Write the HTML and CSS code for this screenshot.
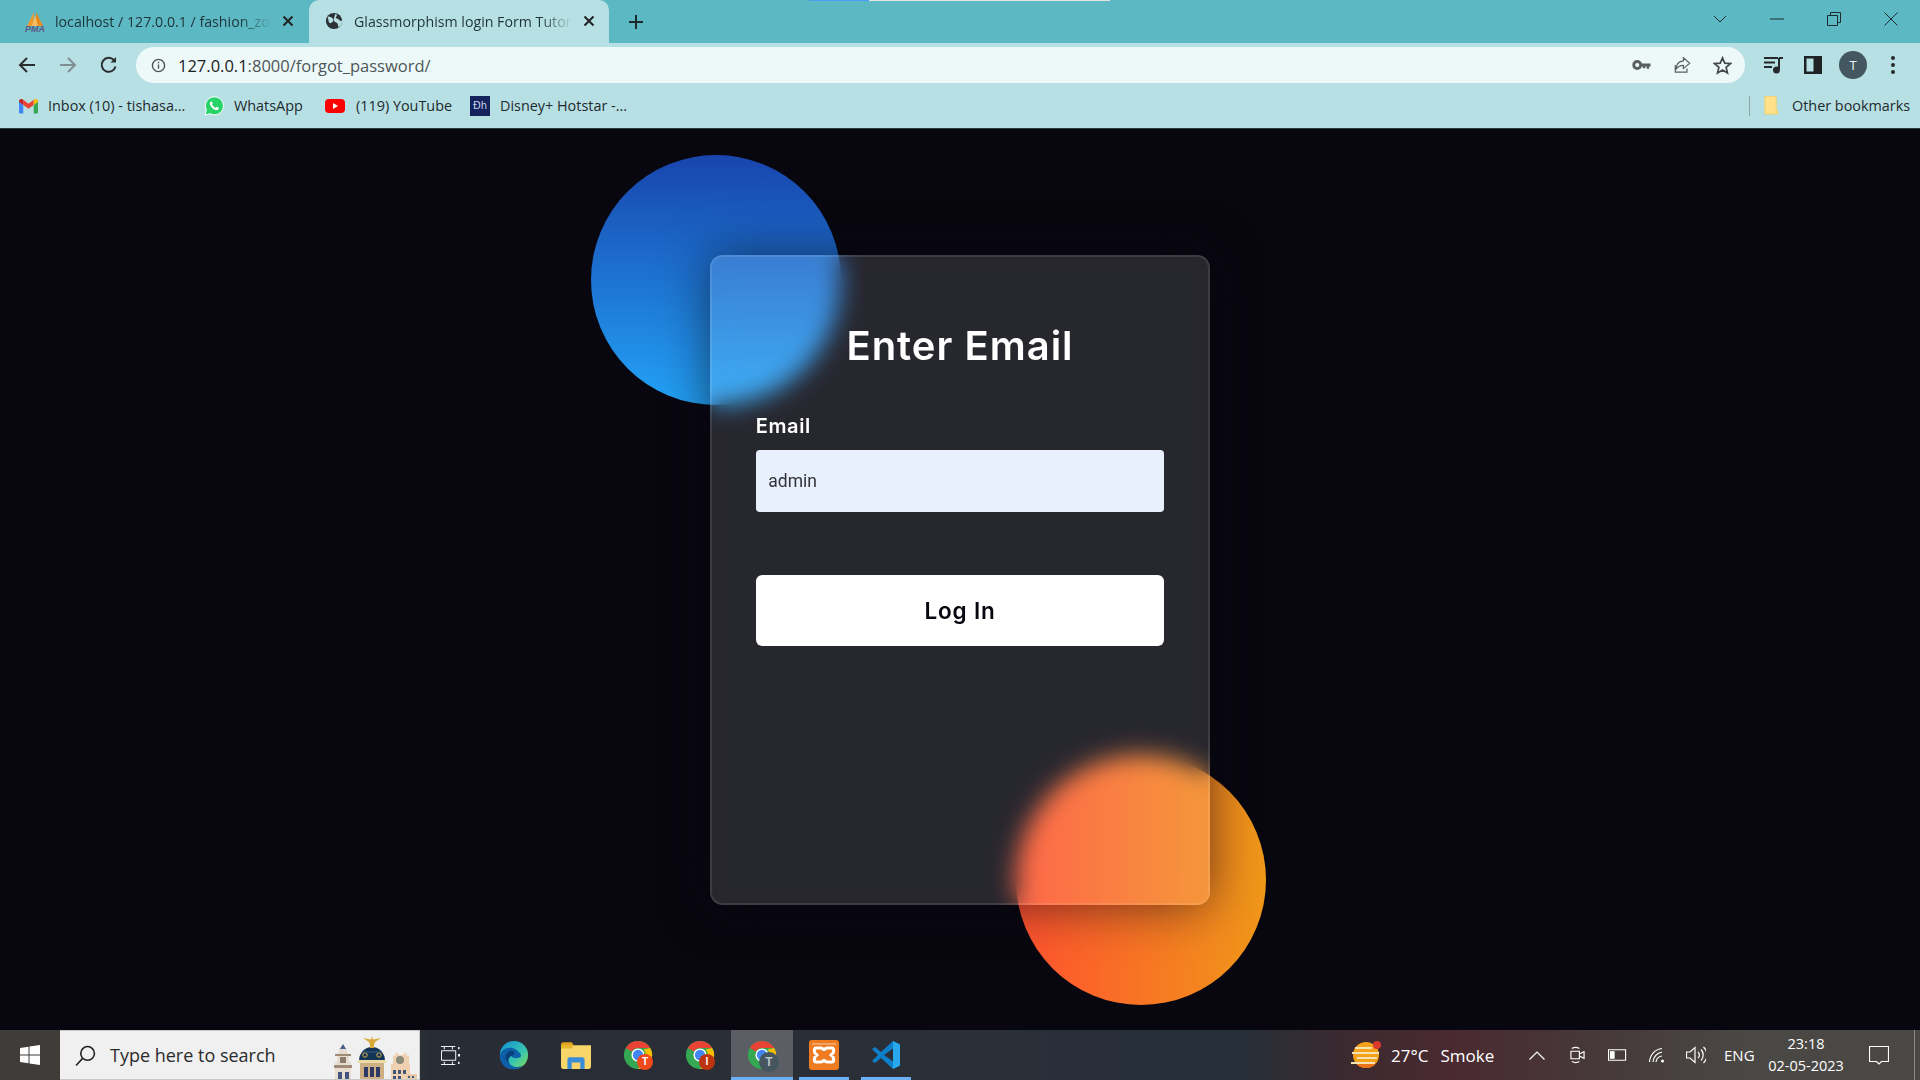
FILE: index.html
```html
<!DOCTYPE html>
<html>

<head>
    <title>Glassmorphism login Form Tutorial</title>
    <link rel="stylesheet" href="styles.css">
</head>

<body>
    <div class="browser">
        <div class="tabstrip">
            <div class="share-bar"><span class="share-bar-blue"></span></div>
            <div class="tab">
                <svg class="fav fav-sails" viewBox="0 0 20 14">
                    <path d="M9 0 2 14h6z" fill="#f29a2e"/>
                    <path d="M11 0v14h7z" fill="#e8891c"/>
                    <path d="M10 3 7 14h6z" fill="#f8bd62"/>
                </svg>
                <span class="fav-pma">PMA</span>
                <span class="tab-title">localhost / 127.0.0.1 / fashion_zone</span>
                <svg class="tab-x" viewBox="0 0 12 12"><path d="M1.5 1.5l9 9M10.5 1.5l-9 9"/></svg>
            </div>
            <div class="tab tab-active">
                <svg class="fav fav-globe" viewBox="0 0 20 20">
                    <circle cx="10" cy="10" r="9" fill="#2b3134"/>
                    <path d="M3 5c3 0 5 1 6 3s-1 3-2 4-3 0-3-2-1-3-1-5zM12 2c2 1 1 3 0 4s3 1 4 3 2 0 3 1c0 3-2 6-4 7-1-2 0-4-2-5s-4-2-3-5 1-4 2-5z" fill="#b7e0e4"/>
                </svg>
                <span class="tab-title">Glassmorphism login Form Tutorial</span>
                <svg class="tab-x" viewBox="0 0 12 12"><path d="M1.5 1.5l9 9M10.5 1.5l-9 9"/></svg>
            </div>
            <svg class="tab-new" viewBox="0 0 14 14"><path d="M7 0v14M0 7h14"/></svg>
            <div class="window-btns">
                <svg class="win-btn win-chev" viewBox="0 0 14 8"><path d="M1 1l6 6 6-6"/></svg>
                <svg class="win-btn" viewBox="0 0 14 14"><path d="M0 7h14"/></svg>
                <svg class="win-btn" viewBox="0 0 14 14"><path d="M.5 3.5h10v10H.5zM3.5 3.5v-3h10v10h-3"/></svg>
                <svg class="win-btn" viewBox="0 0 14 14"><path d="M.5.5l13 13M13.5.5l-13 13"/></svg>
            </div>
        </div>

        <div class="toolbar">
            <svg class="nav-btn" viewBox="0 0 18 18"><path d="M17 9H2M9 2 2 9l7 7"/></svg>
            <svg class="nav-btn nav-off" viewBox="0 0 18 18"><path d="M1 9h15M9 2l7 7-7 7"/></svg>
            <svg class="nav-btn" viewBox="0 0 18 18"><path d="M15.5 10.5A7 7 0 1 1 14 4.2"/><path d="M16 1v5.5h-5.5z" fill="#2a2d30" stroke="none"/></svg>
            <div class="omnibox">
                <svg class="info" viewBox="0 0 16 16">
                    <circle cx="8" cy="8" r="6.5"/>
                    <path d="M8 7v4.5M8 4v1.6"/>
                </svg>
                <span class="url"><b>127.0.0.1</b>:8000/forgot_password/</span>
                <svg class="omni-icon omni-key" viewBox="0 0 20 12">
                    <circle cx="5.5" cy="6" r="3.7" fill="none" stroke="#5a5e60" stroke-width="3"/>
                    <path d="M9 4.5h10.5v3H18v2.5h-2.5V7.5H14V9.5h-2.5v-2H9z" fill="#5a5e60"/>
                </svg>
                <svg class="omni-icon omni-share" viewBox="0 0 20 20">
                    <path d="M2 10v8h13v-4M2 18M11 2l7 6-7 6v-3.500c-3 0-6 1-8 4 0-5 3-8.500 8-9z" fill="none" stroke="#5a5e60" stroke-width="1.300"/>
                </svg>
                <svg class="omni-icon omni-star" viewBox="0 0 20 20">
                    <path d="M10 2l2.400 5.500 6 .5-4.600 3.900 1.400 5.900L10 14.800l-5.200 3 1.400-5.900L1.600 8l6-.5z" fill="none" stroke="#45494b" stroke-width="1.800"/>
                </svg>
            </div>
            <svg class="tool-icon tool-media" viewBox="0 0 20 18">
                <path d="M0 2h14M0 6.500h11M0 11h8" stroke="#26292b" stroke-width="2"/>
                <path d="M15 2v11" stroke="#26292b" stroke-width="2"/>
                <path d="M15 2h4" stroke="#26292b" stroke-width="2"/>
                <circle cx="12.500" cy="14" r="3.500" fill="#26292b"/>
            </svg>
            <svg class="tool-icon tool-panel" viewBox="0 0 18 18">
                <path d="M0 0h18v18H0z" fill="#1f2224"/>
                <path d="M2.500 2.500h7v13h-7z" fill="#b7e0e4"/>
            </svg>
            <span class="avatar">T</span>
            <svg class="tool-icon tool-menu" viewBox="0 0 4 18">
                <circle cx="2" cy="2" r="2" fill="#26292b"/>
                <circle cx="2" cy="9" r="2" fill="#26292b"/>
                <circle cx="2" cy="16" r="2" fill="#26292b"/>
            </svg>
        </div>

        <div class="bookmarks">
            <a class="bm bm-gmail">
                <svg class="bm-icon" viewBox="0 0 20 16">
                    <path d="M0 3v11.500c0 .800.700 1.500 1.500 1.500H4.500V7z" fill="#4285f4"/>
                    <path d="M20 3v11.500c0 .800-.700 1.500-1.500 1.500H15.500V7z" fill="#34a853"/>
                    <path d="M4.500 7 10 11l5.500-4V1.500L10 5.600 4.500 1.500z" fill="#ea4335"/>
                    <path d="M0 3c0-2.400 3-3.300 4.500-1.500V7L0 3.500z" fill="#c5221f"/>
                    <path d="M20 3c0-2.400-3-3.300-4.500-1.500V7L20 3.500z" fill="#fbbc04"/>
                </svg>
                Inbox (10) - tishasa...
            </a>
            <a class="bm bm-wa">
                <svg class="bm-icon" viewBox="0 0 20 20">
                    <path d="M1 19l1.400-5A9 9 0 1 1 6 17.700z" fill="#25d366" stroke="#fff" stroke-width="1"/>
                    <path d="M7 5.500c-1 .500-1.500 1.800-1 3.200 1 2.600 3 4.600 5.600 5.400 1.400.400 2.700-.200 3.100-1.300l.100-1-2.200-1.100-1 1.100c-1.500-.500-2.800-1.700-3.500-3.300l.8-1L7.900 5.500z" fill="#fff"/>
                </svg>
                WhatsApp
            </a>
            <a class="bm bm-yt">
                <svg class="bm-icon" viewBox="0 0 20 14">
                    <rect width="20" height="14" rx="4" fill="#f00"/>
                    <path d="M8 4v6l5-3z" fill="#fff"/>
                </svg>
                (119) YouTube
            </a>
            <a class="bm bm-hs">
                <span class="hs-icon">Ðh</span>
                Disney+ Hotstar -...
            </a>
            <span class="bm-sep"></span>
            <a class="bm bm-other">
                <svg class="bm-icon" viewBox="0 0 16 20">
                    <path d="M1 0h11l1 1v14l1.500 0v4H1z" fill="#ffe28a" stroke="#f3cf63" stroke-width="1"/>
                </svg>
                Other bookmarks
            </a>
        </div>
    </div>

    <div class="page">
        <div class="background">
            <div class="shape shape-blue"></div>
            <div class="shape shape-orange"></div>
            <form class="card">
                <h3>Enter Email</h3>
                <label for="email">Email</label>
                <input id="email" type="text" value="admin">
                <button type="button">Log In</button>
            </form>
        </div>
    </div>

    <div class="taskbar">
        <div class="start">
            <svg viewBox="0 0 20 20"><path d="M0 3l8.500-1.200V9.500H0zM9.500 1.600 20 0v9.500H9.500zM0 10.500h8.500v7.700L0 17zM9.500 10.500H20V20L9.500 18.400z" fill="#fff"/></svg>
        </div>
        <div class="search">
            <svg class="search-glass" viewBox="0 0 20 20"><circle cx="12" cy="8" r="6.500"/><path d="M7.500 12.500 1 19.500"/></svg>
            <span class="search-text">Type here to search</span>
            <svg class="doodle" viewBox="0 1 88 48">
                <!-- left tower -->
                <path d="M4 50V32h2v-8l2-2v-3l4-4 4 4v3l2 2v8h2v18z" fill="#e6dccf"/>
                <path d="M9 19l3-5 3 5z" fill="#44608c"/>
                <path d="M4 24h16v2H4zM3 35h18v3H3z" fill="#a08a76"/>
                <path d="M9 27h6v6H9z" fill="#8c7a6a"/>
                <path d="M7 42h4v8H7zM14 42h4v8h-4z" fill="#42557c"/>
                <!-- dome -->
                <path d="M28 31a13 14 0 0 1 26 0z" fill="#123555"/>
                <path d="M29 33h24v17H29z" fill="#cdb184"/>
                <path d="M27 30h28v3H27z" fill="#ecd8a8"/>
                <path d="M33 37h4v10h-4zM39 37h4v10h-4zM45 37h4v10h-4z" fill="#2e3a63"/>
                <circle cx="34" cy="25" r="2.200" fill="none" stroke="#d9b24a"/>
                <circle cx="48" cy="25" r="2.200" fill="none" stroke="#d9b24a"/>
                <path d="M31 22h20" stroke="#3a5d80"/>
                <path d="M32 8l8 1.500L41 6l1 3.500 8-1.500-6 4-1 3h-4l-1-3z" fill="#d9a93a"/>
                <path d="M39 15h4v3h-4z" fill="#d9a93a"/>
                <!-- clock tower -->
                <path d="M60 50V34h2V25l2 1 1-4 3 3h4l3-3 1 4 2-1v9h1v16z" fill="#efd0b0"/>
                <circle cx="69" cy="30" r="4" fill="#8a8a78"/>
                <path d="M62 40h3v4h-3zM67 40h3v4h-3zM72 40h3v4h-3zM62 46h3v4h-3zM67 46h3v4h-3z" fill="#42557c"/>
                <path d="M75 44h11v6H75z" fill="#e8c9a8"/>
                <path d="M77 46h2v2h-2zM81 46h2v2h-2z" fill="#42557c"/>
            </svg>
        </div>
        <div class="task-item task-first">
            <svg class="task-view" viewBox="0 0 20 20">
                <path d="M0 .5h15M0 19.500h15M3.500 .5v3M12 .5v3M3.500 16.500v3M12 16.500v3" fill="none" stroke="#fff"/>
                <path d="M.5 5h15v10H.5z" fill="none" stroke="#fff"/>
                <path d="M18 1h1.500v2.500H18zM18 8.500h2v2.500h-2zM18 16.500h1.500V19H18z" fill="#fff"/>
            </svg>
        </div>
        <div class="task-item">
            <svg class="task-icon" viewBox="0 0 32 32">
                <defs>
                    <linearGradient id="edge1" x1="0" y1="0" x2="1" y2="1"><stop offset="0" stop-color="#0f8fd6"/><stop offset=".6" stop-color="#39c6b0"/><stop offset="1" stop-color="#86e04f"/></linearGradient>
                </defs>
                <circle cx="16" cy="16" r="15" fill="url(#edge1)"/>
                <path d="M1 17C2 9 12 6 18 10s7 8 3 9-8 0-8-3c-4 0-5 6-1 10 3 3 9 4 14 1-4 4-9 5-14 4C6 30 1 24 1 17z" fill="#0c5fa8"/>
                <path d="M13 17c-3 1-4 6-1 9-3-3-6-5-5-9 1-4 5-6 8-5 3 0 1 5-2 5z" fill="#0a3f7c"/>
            </svg>
        </div>
        <div class="task-item">
            <svg class="task-icon" viewBox="0 0 28 28">
                <path d="M0 4c0-1 1-2 2-2h8l2 3H0z" fill="#e0a51d"/>
                <path d="M0 5h28v20c0 1-1 2-2 2H2c-1 0-2-1-2-2z" fill="#f8d66a"/>
                <path d="M0 5h12l-2 3H0z" fill="#e8b52b"/>
                <path d="M6 27v-9c0-1 1-2 2-2h12c1 0 2 1 2 2v9h-4v-6h-8v6z" fill="#3a8dd8"/>
            </svg>
        </div>
        <div class="task-item">
            <svg class="task-icon" viewBox="0 0 32 32">
                <circle cx="16" cy="16" r="15" fill="#34a853"/>
                <path d="M16 1a15 15 0 0 1 13 7.500H16a7.500 7.500 0 0 0-6.500 3.700L3 8.500A15 15 0 0 1 16 1z" fill="#ea4335"/>
                <path d="M29 8.500A15 15 0 0 1 16 31l6.500-11.200A7.500 7.500 0 0 0 22 10z" fill="#fbbc04"/>
                <circle cx="16" cy="16" r="7" fill="#fff"/>
                <circle cx="16" cy="16" r="5.500" fill="#4285f4"/>
            </svg>
            <span class="chrome-badge badge-red">T</span>
        </div>
        <div class="task-item">
            <svg class="task-icon" viewBox="0 0 32 32">
                <circle cx="16" cy="16" r="15" fill="#34a853"/>
                <path d="M16 1a15 15 0 0 1 13 7.500H16a7.500 7.500 0 0 0-6.500 3.700L3 8.500A15 15 0 0 1 16 1z" fill="#ea4335"/>
                <path d="M29 8.500A15 15 0 0 1 16 31l6.500-11.200A7.500 7.500 0 0 0 22 10z" fill="#fbbc04"/>
                <circle cx="16" cy="16" r="7" fill="#fff"/>
                <circle cx="16" cy="16" r="5.500" fill="#4285f4"/>
            </svg>
            <span class="chrome-badge badge-dark-red">I</span>
        </div>
        <div class="task-item task-active task-open">
            <svg class="task-icon" viewBox="0 0 32 32">
                <circle cx="16" cy="16" r="15" fill="#34a853"/>
                <path d="M16 1a15 15 0 0 1 13 7.500H16a7.500 7.500 0 0 0-6.500 3.700L3 8.500A15 15 0 0 1 16 1z" fill="#ea4335"/>
                <path d="M29 8.500A15 15 0 0 1 16 31l6.500-11.200A7.500 7.500 0 0 0 22 10z" fill="#fbbc04"/>
                <circle cx="16" cy="16" r="7" fill="#fff"/>
                <circle cx="16" cy="16" r="5.500" fill="#4285f4"/>
            </svg>
            <span class="chrome-badge badge-slate">T</span>
        </div>
        <div class="task-item task-open">
            <svg class="task-icon" viewBox="0 0 30 30">
                <rect width="30" height="30" rx="3" fill="#ef7b22"/>
                <path d="M3 4h24" stroke="#f6b27a" stroke-width="1.500"/>
                <path d="M7 8h5c2 0 3 2 3 3 0-1 1-3 3-3h5c2 0 2 3 1 5l-2 2 2 2c1 2 1 5-1 5h-5c-2 0-3-2-3-3 0 1-1 3-3 3H7c-2 0-2-3-1-5l2-2-2-2C5 11 5 8 7 8z" fill="none" stroke="#fff" stroke-width="3"/>
            </svg>
        </div>
        <div class="task-item task-open">
            <svg class="task-icon" viewBox="0 0 30 30">
                <path d="M22 1l7 3.500v21L22 29 10 18l-6 5-3-2 6-6-6-6 3-2 6 5z" fill="#0e7fcb"/>
                <path d="M22 1l7 3.500v21L22 29z" fill="#29a8ee"/>
                <path d="M22 8.500 13 15l9 6.500z" fill="#2b3038"/>
            </svg>
        </div>

        <div class="tray">
            <div class="weather">
                <svg class="weather-icon" viewBox="0 0 30 30">
                    <circle cx="15" cy="15" r="13" fill="#f4a21a"/>
                    <path d="M15 28a13 13 0 0 1-11-6h22a13 13 0 0 1-11 6z" fill="#e9721a"/>
                    <path d="M4 8h17M1 13h27M6 18h20M0 23h24" stroke="#f5e3b4" stroke-width="1.800"/>
                    <circle cx="26" cy="5" r="4" fill="#d93a2b"/>
                </svg>
                <span class="weather-temp">27°C</span>
                <span class="weather-text">Smoke</span>
            </div>
            <svg class="tray-icon tray-chev" viewBox="0 0 16 9"><path d="M.5 8.500 8 1l7.500 7.500"/></svg>
            <svg class="tray-icon tray-meet" viewBox="0 0 16 20">
                <path d="M1 6h9v8H1z"/>
                <path d="M10 9l5-2.500v7L10 11M2 3a8 8 0 0 1 8 0M2 17a8 8 0 0 0 8 0"/>
            </svg>
            <svg class="tray-icon tray-batt" viewBox="0 0 20 12">
                <path d="M.5.500h18v11H.5z"/>
                <path d="M2 2h5v8H2z" fill="#fff" stroke="none"/>
            </svg>
            <svg class="tray-icon tray-wifi" viewBox="0 0 16 16">
                <path d="M.5 15A14 14 0 0 1 13 1.500M4 15A11 11 0 0 1 13 5M7 15a7 7 0 0 1 6-6"/>
                <circle cx="13.500" cy="14" r="1.500" fill="#fff" stroke="none"/>
            </svg>
            <svg class="tray-icon tray-vol" viewBox="0 0 20 18">
                <path d="M.5 6h3.500L9 1.500v15L4 12H.5zM12 6a4 4 0 0 1 0 6M15 3.500a8 8 0 0 1 0 11M17.500 1a11 11 0 0 1 0 16"/>
            </svg>
            <span class="tray-lang">ENG</span>
            <div class="clock">
                <span>23:18</span>
                <span>02-05-2023</span>
            </div>
            <svg class="tray-icon tray-note" viewBox="0 0 20 19">
                <path d="M.5.500h19v15h-7L10 18l-2.500-2.500h-7z"/>
            </svg>
            <span class="show-desktop"></span>
        </div>
    </div>
</body>

</html>
```

FILE: styles.css
```css
* {
    box-sizing: border-box;
}

html,
body {
    margin: 0;
    height: 100%;
}

body {
    display: flex;
    flex-direction: column;
    height: 1080px;
    overflow: hidden;
    background: #080710;
    font-family: "Open Sans", sans-serif;
}

svg {
    display: block;
    flex: none;
}

/* browser chrome */
.browser {
    flex: none;
    height: 129px;
    background: #b7e0e4;
    border-bottom: 1px solid #2c3a3d;
}

.tabstrip {
    position: relative;
    display: flex;
    align-items: center;
    height: 43px;
    padding-left: 8px;
    background: #5cb8c2;
}

.share-bar {
    position: absolute;
    top: 0;
    left: 809px;
    width: 301px;
    height: 1px;
    background: #e4e4e4;
}

.share-bar-blue {
    display: block;
    width: 60px;
    height: 1px;
    background: #4a9cf5;
}

.tab {
    position: relative;
    display: flex;
    align-items: center;
    width: 300px;
    height: 43px;
    padding: 0 14px 0 17px;
    padding-bottom: 1px;
    color: #1f3438;
    font-size: 14.2px;
}

.tab-active {
    margin-left: 1px;
    padding-left: 16px;
    background: #b7e0e4;
    border-radius: 10px 10px 0 0;
}

.fav {
    width: 18px;
    height: 18px;
    margin-right: 11px;
}

.fav-sails {
    width: 20px;
    height: 14px;
    margin-right: 10px;
    margin-bottom: 5px;
}

.fav-globe {
    margin-right: 11px;
}

.fav-pma {
    position: absolute;
    left: 17px;
    top: 24px;
    color: #5a5a86;
    font-family: "Liberation Sans", sans-serif;
    font-size: 9px;
    font-style: italic;
    font-weight: 700;
}

.tab-title {
    flex: 1;
    overflow: hidden;
    white-space: nowrap;
    margin-right: 10px;
    -webkit-mask-image: linear-gradient(to right, #000 85%, transparent);
    mask-image: linear-gradient(to right, #000 85%, transparent);
}

.tab-x {
    width: 12px;
    height: 12px;
    fill: none;
    stroke: #222;
    stroke-width: 2;
}

.tab-new {
    width: 14px;
    height: 14px;
    margin-left: 20px;
    fill: none;
    stroke: #1c2a2d;
    stroke-width: 2;
}

.window-btns {
    display: flex;
    align-items: center;
    margin-left: auto;
    padding-right: 22px;
    gap: 43px;
}

.win-btn {
    width: 14px;
    height: 14px;
    margin-bottom: 6px;
    fill: none;
    stroke: #1f2c2f;
    stroke-width: 1;
}

.win-chev {
    height: 8px;
}

.toolbar {
    display: flex;
    align-items: center;
    height: 44px;
    padding-left: 18px;
}

.nav-btn {
    width: 18px;
    height: 18px;
    margin-right: 23px;
    fill: none;
    stroke: #2a2d30;
    stroke-width: 2;
}

.nav-off {
    stroke: #808f92;
}

.omnibox {
    display: flex;
    align-items: center;
    width: 1609px;
    height: 36px;
    margin-left: -5px;
    padding: 0 13px 0 15px;
    background: #edf9f9;
    border-radius: 18px;
}

.info {
    width: 15px;
    height: 15px;
    margin-right: 12px;
    fill: none;
    stroke: #4f5355;
    stroke-width: 1.500;
}

.url {
    flex: 1;
    color: #4f5558;
    font-size: 16.5px;
}

.url b {
    color: #1c2022;
    font-weight: 400;
}

.omni-icon {
    height: 18px;
}

.omni-key {
    width: 19px;
    height: 12px;
    margin-right: 22px;
}

.omni-share {
    width: 19px;
    margin-right: 21px;
}

.omni-star {
    width: 19px;
    height: 19px;
}

.tool-icon {
    fill: none;
}

.tool-media {
    width: 20px;
    height: 18px;
    margin-left: 19px;
}

.tool-panel {
    width: 18px;
    height: 18px;
    margin-left: 20px;
}

.avatar {
    flex: none;
    width: 28px;
    height: 28px;
    margin-left: 17px;
    color: #eef3f5;
    background: #44565f;
    border-radius: 50%;
    font-size: 13px;
    line-height: 28px;
    text-align: center;
}

.tool-menu {
    width: 4px;
    height: 18px;
    margin-left: 24px;
}

.bookmarks {
    display: flex;
    align-items: center;
    height: 41px;
    padding-bottom: 4px;
    color: #1f2a2d;
    font-size: 14.4px;
}

.bm {
    display: flex;
    align-items: center;
    white-space: nowrap;
}

.bm-icon {
    margin-right: 11px;
}

.bm-gmail {
    width: 204px;
    padding-left: 19px;
}

.bm-gmail .bm-icon {
    width: 19px;
    height: 16px;
    margin-right: 10px;
}

.bm-wa {
    width: 121px;
}

.bm-wa .bm-icon {
    width: 20px;
    height: 20px;
    margin-right: 10px;
}

.bm-yt {
    width: 145px;
}

.bm-yt .bm-icon {
    width: 20px;
    height: 14px;
    margin-right: 11px;
}

.bm-hs {
    width: 1279px;
}

.hs-icon {
    flex: none;
    width: 20px;
    height: 20px;
    margin-right: 10px;
    color: #c8d4ee;
    background: #14235c;
    font-family: "DejaVu Sans", sans-serif;
    font-size: 10px;
    line-height: 20px;
    text-align: center;
}

.bm-sep {
    flex: none;
    width: 1px;
    height: 20px;
    background: #8ea4a8;
}

.bm-other {
    margin-left: 14px;
}

.bm-other .bm-icon {
    width: 15px;
    height: 19px;
    margin-right: 13px;
}

/* login page */
.page {
    flex: 1;
    display: flex;
    align-items: center;
    justify-content: center;
    background: #080710;
}

.background {
    position: relative;
    width: 537.5px;
    height: 650px;
}

.shape {
    position: absolute;
    width: 250px;
    height: 250px;
    border-radius: 50%;
}

.shape-blue {
    top: -100px;
    left: -100px;
    background: linear-gradient(#1845ad, #23a2f6);
}

.shape-orange {
    right: -37.5px;
    bottom: -100px;
    background: linear-gradient(to right, #ff512f, #f09819);
}

.card {
    position: absolute;
    top: 0;
    left: 18.75px;
    width: 500px;
    height: 650px;
    padding: 62.5px 43.75px;
    color: #fff;
    background: rgba(255, 255, 255, 0.13);
    border: 2.5px solid rgba(255, 255, 255, 0.1);
    border-radius: 12.5px;
    -webkit-backdrop-filter: blur(12.5px);
    backdrop-filter: blur(12.5px);
    box-shadow: 0 0 50px rgba(8, 7, 16, 0.6);
    font-family: Inter, sans-serif;
}

.card h3 {
    margin: 0;
    font-size: 40px;
    font-weight: 600;
    letter-spacing: 1px;
    line-height: 54px;
    text-align: center;
}

.card label {
    display: block;
    margin-top: 38.5px;
    font-size: 20px;
    font-weight: 600;
    letter-spacing: 0.6px;
    line-height: 28px;
}

.card input {
    display: block;
    width: 100%;
    height: 62.5px;
    margin-top: 10px;
    padding: 0 12.5px;
    color: #33333a;
    background: #e8f0fe;
    border: 0;
    border-radius: 3.75px;
    font-family: Roboto, sans-serif;
    font-size: 17.5px;
    font-weight: 400;
}

.card button {
    display: block;
    width: 100%;
    height: 70.5px;
    margin-top: 63px;
    color: #080710;
    background: #fff;
    border: 0;
    border-radius: 6.25px;
    font-family: Inter, sans-serif;
    font-size: 22.5px;
    font-weight: 600;
    letter-spacing: 0.8px;
}

/* windows taskbar */
.taskbar {
    flex: none;
    display: flex;
    height: 50px;
    color: #fff;
    background: linear-gradient(to right, #3f3c39 0, #3a3937 380px, #282c35 430px, #2a2f38 1000px, #262f38 1240px, #3a2a30 1340px, #4a2a30 1450px, #46393a 1600px, #4a4844 1750px, #4a4844 100%);
}

.start {
    flex: none;
    display: flex;
    align-items: center;
    justify-content: center;
    width: 60px;
}

.start svg {
    width: 20px;
    height: 20px;
}

.search {
    flex: none;
    display: flex;
    align-items: center;
    width: 360px;
    padding-left: 15px;
    color: #2b2b2b;
    background: #f0f0f0;
    border-top: 1px solid #c8c8c8;
    border-right: 1px solid #c8c8c8;
    border-bottom: 1px solid #c8c8c8;
    font-size: 18px;
}

.search-glass {
    width: 21px;
    height: 21px;
    margin-right: 14px;
    fill: none;
    stroke: #222;
    stroke-width: 1.500;
}

.search-text {
    flex: 1;
    white-space: nowrap;
}

.doodle {
    width: 88px;
    height: 48px;
}

.task-item {
    position: relative;
    flex: none;
    display: flex;
    align-items: center;
    justify-content: center;
    width: 62px;
}

.task-first {
    width: 63px;
    padding-right: 3px;
}

.task-open::after {
    content: "";
    position: absolute;
    left: 6px;
    right: 6px;
    bottom: 0;
    height: 3px;
    background: #6cb0f5;
}

.task-active {
    background: #5b5e64;
}

.task-active::after {
    left: 0;
    right: 0;
}

.task-icon {
    width: 30px;
    height: 30px;
}

.task-view {
    width: 19px;
    height: 19px;
}

.chrome-badge {
    position: absolute;
    top: 24px;
    left: 30px;
    width: 16px;
    height: 16px;
    border-radius: 50%;
    font-family: Roboto, sans-serif;
    font-size: 10px;
    font-weight: 700;
    line-height: 16px;
    text-align: center;
}

.badge-red {
    background: #f04a1c;
}

.badge-dark-red {
    background: #bd3410;
}

.badge-slate {
    top: 22px;
    left: 28px;
    width: 20px;
    height: 20px;
    color: #b9c4c8;
    background: #45565f;
    font-size: 12px;
    line-height: 20px;
}

.tray {
    flex: 1;
    display: flex;
    align-items: center;
    min-width: 0;
    padding-left: 432px;
    font-size: 16px;
}

.weather {
    flex: none;
    display: flex;
    align-items: center;
    width: 164px;
    margin-left: 2px;
    font-size: 17px;
    white-space: nowrap;
}

.weather-icon {
    width: 30px;
    height: 30px;
    margin-right: 10px;
}

.weather-text {
    margin-left: 12px;
}

.tray-icon {
    fill: none;
    stroke: #fff;
    stroke-width: 1.200;
}

.tray-chev {
    width: 16px;
    height: 9px;
    margin-left: 14px;
}

.tray-meet {
    width: 15px;
    height: 20px;
    margin-left: 25px;
}

.tray-batt {
    width: 19px;
    height: 12px;
    margin-left: 23px;
}

.tray-wifi {
    width: 16px;
    height: 16px;
    margin-left: 22px;
}

.tray-vol {
    width: 20px;
    height: 18px;
    margin-left: 21px;
}

.tray-lang {
    flex: none;
    width: 30px;
    margin-left: 18px;
    font-size: 15px;
}

.clock {
    flex: none;
    display: flex;
    flex-direction: column;
    align-items: center;
    width: 80px;
    margin-left: 12px;
    font-size: 14.5px;
    line-height: 22px;
}

.tray-note {
    width: 20px;
    height: 19px;
    margin-left: 23px;
}

.show-desktop {
    flex: none;
    width: 1px;
    height: 50px;
    margin-left: 25px;
    background: #8a8a88;
}
```
